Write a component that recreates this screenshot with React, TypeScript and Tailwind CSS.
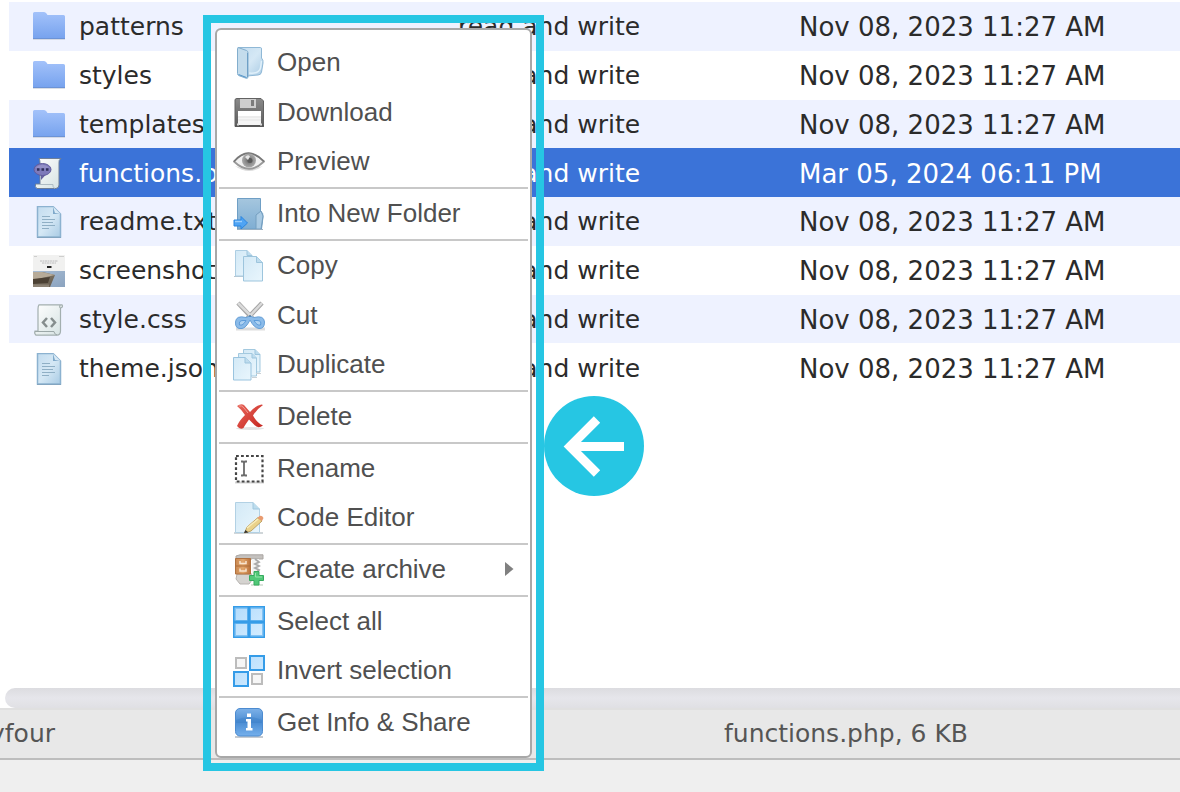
import { JSX } from "react";

type FileRow = {
  name: string;
  date: string;
  icon: JSX.Element;
  selected?: boolean;
};

type MenuItem = {
  label: string;
  icon: JSX.Element;
  submenu?: boolean;
};

// Gradients shared by all the icons
const IconDefs = () => (
  <svg className="absolute w-0 h-0" aria-hidden="true">
    <defs>
      <linearGradient id="folder" x1="0" y1="0" x2="0" y2="1">
        <stop offset="0" stopColor="#a3c2fa" />
        <stop offset="1" stopColor="#76a2ee" />
      </linearGradient>
      <linearGradient id="page" x1="0" y1="0" x2="1" y2="1">
        <stop offset="0" stopColor="#c3dcef" />
        <stop offset="0.5" stopColor="#d5e8f5" />
        <stop offset="1" stopColor="#a9cbe4" />
      </linearGradient>
      <linearGradient id="sheet" x1="0" y1="0" x2="1" y2="1">
        <stop offset="0" stopColor="#d3e9f6" />
        <stop offset="1" stopColor="#e9f6fd" />
      </linearGradient>
      <linearGradient id="scroll" x1="0" y1="0" x2="1" y2="1">
        <stop offset="0" stopColor="#ffffff" />
        <stop offset="1" stopColor="#d5e2e2" />
      </linearGradient>
      <linearGradient id="blueFolder" x1="0" y1="0" x2="0" y2="1">
        <stop offset="0" stopColor="#a5c6de" />
        <stop offset="1" stopColor="#7faed3" />
      </linearGradient>
      <linearGradient id="metal" x1="0" y1="0" x2="0" y2="1">
        <stop offset="0" stopColor="#8a8a8a" />
        <stop offset="1" stopColor="#5c5c5c" />
      </linearGradient>
      <linearGradient id="red" x1="0" y1="0" x2="1" y2="1">
        <stop offset="0" stopColor="#e8675c" />
        <stop offset="1" stopColor="#c5231d" />
      </linearGradient>
      <linearGradient id="tile" x1="0" y1="0" x2="1" y2="1">
        <stop offset="0" stopColor="#b4dcfc" />
        <stop offset="1" stopColor="#d3ecff" />
      </linearGradient>
      <linearGradient id="info" x1="0" y1="0" x2="0" y2="1">
        <stop offset="0" stopColor="#7db1e8" />
        <stop offset="0.5" stopColor="#4a8cd3" />
        <stop offset="1" stopColor="#75b0ec" />
      </linearGradient>
      <linearGradient id="drawer" x1="0" y1="0" x2="1" y2="0">
        <stop offset="0" stopColor="#c98952" />
        <stop offset="0.5" stopColor="#e3a66c" />
        <stop offset="1" stopColor="#b9713a" />
      </linearGradient>
      <radialGradient id="iris">
        <stop offset="0" stopColor="#5d5d5d" />
        <stop offset="0.45" stopColor="#888888" />
        <stop offset="1" stopColor="#ababab" />
      </radialGradient>
      <linearGradient id="rock" x1="0" y1="0" x2="1" y2="1">
        <stop offset="0" stopColor="#8f8878" />
        <stop offset="1" stopColor="#63584a" />
      </linearGradient>
      <linearGradient id="sky" x1="0" y1="0" x2="1" y2="1">
        <stop offset="0" stopColor="#a8bdd4" />
        <stop offset="1" stopColor="#8ba3bf" />
      </linearGradient>
    </defs>
  </svg>
);

const Icon = ({ children }: { children: React.ReactNode }) => (
  <svg className="size-8 shrink-0" viewBox="0 0 32 32" fill="none" aria-hidden="true">
    {children}
  </svg>
);

const FolderIcon = () => (
  <Icon>
    <path d="M0 2.500Q0 1 1.500 1H11Q12.500 1 13.500 2.500L14.500 4H30.500Q32 4 32 5.500V28H0Z" fill="url(#folder)" />
    <path d="M0 27.500H32" stroke="#6c93d6" />
    <path d="M0 28.500H32" stroke="#c3c8d3" opacity="0.600" />
  </Icon>
);

const TextFileIcon = () => (
  <Icon>
    <path d="M4.500 .5H20L27.500 8V31H4.500Z" fill="url(#page)" stroke="#8cb2d0" strokeWidth="1.500" />
    <path d="M20 .5V8H27.500Z" fill="#7fa9ca" />
    <path d="M20 .5 22 7 27.500 8Z" fill="#d8eaf6" />
    <path d="M9 10.500H17M9 13.500H22M9 16.500H20M9 19.500H22M9 22.500H16" stroke="#8fafc5" />
    <path d="M4 31.500H28" stroke="#83a5c0" />
  </Icon>
);

const PhpIcon = () => (
  <Icon>
    <path d="M6 .5H28Q25.500 2 26 5V27Q26 30 23 30.500H4Q1.500 29 2.500 26H7V5Q7 2 6 .5Z" fill="url(#scroll)" stroke="#6e7f99" />
    <path d="M3 26.500H20Q19 29 22 30.500" stroke="#aebcc4" />
    <path d="M8 17V22L13 16.500Z" fill="#66629f" />
    <ellipse cx="9.500" cy="11.500" rx="8.500" ry="6" fill="#7e7aba" stroke="#605c9c" />
    <path d="M2.500 9.500Q9 4 16.500 9.500Q9 11.500 2.500 9.500Z" fill="#a19ed0" opacity="0.600" />
    <path d="M4 11.500H6.500M8.500 11.500H11M13 11.500H15.500" stroke="#30305c" strokeWidth="2.500" />
  </Icon>
);

const ScreenshotIcon = () => (
  <Icon>
    <path d="M0 0H32V16H0Z" fill="#f1f1f0" />
    <path d="M1 1.500H4M26 1.500H31" stroke="#aaaaaa" strokeWidth="0.500" />
    <path d="M7 6H25M9 8H23" stroke="#b0b0b0" strokeWidth="0.800" strokeDasharray="2 .5" />
    <path d="M14 12H18.500" stroke="#222222" strokeWidth="2" />
    <path d="M0 16H32V32H0Z" fill="url(#sky)" />
    <path d="M0 17H10L22 20L17 32H0Z" fill="url(#rock)" />
    <path d="M0 17H9L22 20L0 25Z" fill="#b7ab98" />
    <path d="M0 24 17 22 15 28 0 29Z" fill="#4c4134" />
    <path d="M0 29.500H16V32H0Z" fill="#8c8274" />
  </Icon>
);

const CssIcon = () => (
  <Icon>
    <path d="M6 .8H29Q30.500 3 27.500 4V27Q27.500 31 24 31.200H3Q1 29.500 2 27H5V5Q5 2 6 .8Z" fill="url(#scroll)" stroke="#a3afaf" strokeWidth="1.200" />
    <path d="M27.500 4.500Q26 3.500 27 1M2 27.500H21Q21 30 24 31" stroke="#9ca8a8" />
    <path d="m14 14-4 4.500 4 4.500M18 14l4 4.500-4 4.500" stroke="#858d8d" strokeWidth="2.500" />
  </Icon>
);

const OpenIcon = () => (
  <Icon>
    <path d="M5 .5H27.500Q28.500 .5 28.500 2V11Q30.500 13 30 16L28.500 25Q28 28 25 28L14 29Z" fill="url(#page)" stroke="#8fb8d6" />
    <path d="M16 26Q26 27 27.500 21L28.500 14" stroke="#e0f0fa" strokeWidth="1.500" />
    <path d="M4.500 1.500Q4.500 .5 6 .8L13.500 3.500Q15 4 15 6V30Q15 31.800 13 31.200L5.500 28.500Q4.500 28 4.500 26.500Z" fill="#c4dcec" stroke="#83aecd" />
    <path d="M14.500 6V30" stroke="#6fa0c6" />
    <path d="M5.500 27.500 13.500 30.500" stroke="#5293c9" />
  </Icon>
);

const DownloadIcon = () => (
  <Icon>
    <path d="M2 3Q2 1.500 4 1.500H28L30.500 4V29.500H2Z" fill="url(#metal)" stroke="#626262" />
    <path d="M7 2H23V11H7Z" fill="#cecece" />
    <path d="M18 3H21V9H18Z" fill="#7c7c7c" />
    <path d="M5 14H28V28H5Z" fill="#f5f5f5" />
    <path d="M5 14H28V19H5Z" fill="#ffffff" />
    <path d="M5 20H28M5 23H28" stroke="#e3e3e3" />
    <path d="M2 29H31" stroke="#555555" strokeWidth="1.500" />
    <path d="M4 27.500H6M27 27.500H29" stroke="#dddddd" strokeWidth="2" />
  </Icon>
);

const PreviewIcon = () => (
  <Icon>
    <path d="M2 20Q16 30 30 20Q16 25 2 20Z" fill="#dcdcdc" />
    <path d="M1 15.500Q15 -1 31 15.500Q16 30 1 15.500Z" fill="#f1f1f1" stroke="#9a9a9a" strokeWidth="1.800" />
    <path d="M1 15.500Q15 -1 31 15.500" stroke="#777777" strokeWidth="1.500" />
    <circle cx="16" cy="14.500" r="7" fill="url(#iris)" />
    <circle cx="17" cy="14.500" r="2.500" fill="#5a5a5a" />
    <path d="M12 11Q15 8 17 10.500L15 14Z" fill="#e5e5e5" />
  </Icon>
);

const IntoFolderIcon = () => (
  <Icon>
    <path d="M4.500 .5H27.500V13Q30.500 15 30 19L28.500 31H4.500Z" fill="url(#blueFolder)" stroke="#6f9fc5" />
    <path d="M28 13 23 17V31H28L30 18Z" fill="#a9cae3" stroke="#759fc0" />
    <path d="M4 31.500H30" stroke="#9ab0c2" />
    <path d="M1 22H8V18.500L14.500 25L8 31V28H1Z" fill="#4fa4f4" stroke="#2b85df" />
    <path d="M2 23.500H9" stroke="#9bcefc" strokeWidth="1.500" />
  </Icon>
);

const CopyIcon = () => (
  <Icon>
    <path d="M1 26.500H12" stroke="#b9c5cc" />
    <path d="M2.500 .5H14L19 5.500V26H2.500Z" fill="url(#sheet)" stroke="#adcee3" />
    <path d="M10.500 6.500H23.500L29.500 12.500V31H10.500Z" fill="url(#sheet)" stroke="#9dc5dd" />
    <path d="M14 .5V5.500H19M23.500 6.500V12.500H29.500" fill="#bedcee" stroke="#9dc5dd" />
  </Icon>
);

const CutIcon = () => (
  <Icon>
    <path d="M3 29H32" stroke="#dddddd" strokeWidth="3" />
    <path d="M5 3 21 20M29 3 13 20" stroke="#a5a5a5" strokeWidth="4.500" />
    <path d="M5 3 21 19M29 3 14 19" stroke="#dadada" strokeWidth="2.500" />
    <path d="M17 16 21 17.500Q31 15 31.500 22Q31.500 29 26 28.500Q21 28 17 20Q13 28 9 28.500Q2 29.500 2.500 22Q3 15 13 17.500Z" fill="#8bbbe9" stroke="#68a0d6" />
    <path d="M6.500 25Q5.500 20.500 10 20.500H13Q10 26 6.500 25ZM27.500 25Q29 20.500 24 20.500H21Q24 26 27.500 25Z" fill="#aed2f2" stroke="#5d9cda" />
    <circle cx="17" cy="16" r="1" fill="#547ba0" />
  </Icon>
);

const DuplicateIcon = () => (
  <Icon>
    <path d="M10.500 .5H22L27 5.500V23H10.500Z" fill="url(#sheet)" stroke="#a3c9df" />
    <path d="M5.500 4.500H19L23.500 9V27H5.500Z" fill="url(#sheet)" stroke="#a3c9df" />
    <path d="M23 24.500H28M19 28.500H24" stroke="#c9d1d6" />
    <path d="M22 .5V5.500H27M19 4.500V9H23.500" fill="#bedcee" stroke="#9dc5dd" />
    <path d="M.5 8.500H12L18 14V31H.5Z" fill="url(#sheet)" stroke="#9ac4df" />
    <path d="M12 8.500V14H18" fill="#bedcee" stroke="#9dc5dd" />
  </Icon>
);

const DeleteIcon = () => (
  <Icon>
    <ellipse cx="17" cy="27.500" rx="14" ry="1.500" fill="#e3e3e3" />
    <path d="M4 5Q8 2 11 4L17 11Q22 5 28.500 3.500L30 4Q24 8 20 14.500Q24 22 30 24.500Q25 28 21.500 24L16 18.500Q12 24 10.500 27Q7 29 4 25Q6 20 12 14Q9 9 4 5Z" fill="url(#red)" />
    <path d="M6 5Q9 4 11 7L15 12" stroke="#f19a91" />
  </Icon>
);

const RenameIcon = () => (
  <Icon>
    <path d="M2 29.500H31" stroke="#d4d4d4" strokeWidth="2" />
    <path d="M3 3H29.500V28.500H3Z" stroke="#454545" strokeWidth="2.200" strokeDasharray="2.800 2.200" />
    <path d="M8 8.500H10L11 10 12 8.500H14M8 22.500H10L11 21 12 22.500H14M11 10V21" stroke="#6c6c6c" strokeWidth="1.800" />
  </Icon>
);

const EditorIcon = () => (
  <Icon>
    <path d="M1 31H30" stroke="#c1c9cd" strokeWidth="1.500" />
    <path d="M2.500 .5H20L26.500 7V30.500H2.500Z" fill="url(#sheet)" stroke="#b2d1e4" />
    <path d="M20 .5V7H26.500" fill="#bcdced" stroke="#a0c8df" />
    <path d="M11.500 31 14 25 25 15.500 29 19 18 29Z" fill="#ead28a" stroke="#bda366" />
    <path d="M14 26 25 17" stroke="#f8edbd" strokeWidth="1.500" />
    <path d="m24.500 16 2-2Q29 13 30.500 16L29 19Z" fill="#e99b70" />
    <path d="m11 31 1.500-3 3 2.500Z" fill="#333333" />
  </Icon>
);

const ArchiveIcon = () => (
  <Icon>
    <path d="M3 2 7 .8H30V5H3Z" fill="#c4c1be" stroke="#aaa6a3" />
    <path d="M4 20H19V26L16 30H7L3 25Z" fill="#d5d3d0" stroke="#b7b4b1" />
    <path d="M19 5H26V21H19Z" fill="#f4f4f4" />
    <path d="M22 5 26 8 22 10 26 12 22 14 26 16 23 19" stroke="#aaaaaa" strokeWidth="1.800" />
    <path d="M2.500 4.500H17.500V20H2.500Z" fill="url(#drawer)" stroke="#b0713f" />
    <path d="M3 12H17" stroke="#ad6c38" />
    <path d="M7 7V9.500H13V7M7 14.500V17H13V14.500" stroke="#f8e3ce" strokeWidth="1.500" />
    <path d="M18 31H30" stroke="#ccd8cc" strokeWidth="1.500" />
    <path d="M21 17.500H26V21.500H30.500V26.500H26V31H21V26.500H16.500V21.500H21Z" fill="#51c878" stroke="#36ab5f" />
    <path d="M22.500 19V23H29" stroke="#98e4ab" />
  </Icon>
);

const SelectAllIcon = () => (
  <Icon>
    <path d="M0 0H32V32H0Z" fill="#359ce8" />
    <path d="M1.500 1.500H14.500V14.500H1.500ZM17.500 1.500H30.500V14.500H17.500ZM1.500 17.500H14.500V30.500H1.500ZM17.500 17.500H30.500V30.500H17.500Z" fill="#84c3f4" />
    <path d="M3 3H14V14H3ZM18 3H29V14H18ZM3 18H14V29H3ZM18 18H29V29H18Z" fill="url(#tile)" />
  </Icon>
);

const InvertIcon = () => (
  <Icon>
    <path d="M17 1H31V15H17ZM1 17H15V31H1Z" fill="url(#tile)" stroke="#359ce8" strokeWidth="2" />
    <path d="M3 3H13V13H3ZM19 19H29V29H19Z" fill="#f6f6f6" stroke="#bcbcbc" strokeWidth="2" />
  </Icon>
);

const InfoIcon = () => (
  <Icon>
    <path d="M2 30H30" stroke="#c5cad0" strokeWidth="2" />
    <rect x="2.500" y="1.500" width="27" height="27.500" rx="4.500" fill="url(#info)" stroke="#4c8bd0" />
    <path d="M3 13Q16 7 29 13V16H3Z" fill="#377bc4" opacity="0.350" />
    <path d="M14 6.500H18V10H14ZM13 12H18V21H19.500V23.500H13V21H14.500V14.500H13Z" fill="#ffffff" />
  </Icon>
);

const files: FileRow[] = [
  { name: "patterns", date: "Nov 08, 2023 11:27 AM", icon: <FolderIcon /> },
  { name: "styles", date: "Nov 08, 2023 11:27 AM", icon: <FolderIcon /> },
  { name: "templates", date: "Nov 08, 2023 11:27 AM", icon: <FolderIcon /> },
  { name: "functions.php", date: "Mar 05, 2024 06:11 PM", icon: <PhpIcon />, selected: true },
  { name: "readme.txt", date: "Nov 08, 2023 11:27 AM", icon: <TextFileIcon /> },
  { name: "screenshot.png", date: "Nov 08, 2023 11:27 AM", icon: <ScreenshotIcon /> },
  { name: "style.css", date: "Nov 08, 2023 11:27 AM", icon: <CssIcon /> },
  { name: "theme.json", date: "Nov 08, 2023 11:27 AM", icon: <TextFileIcon /> },
];

const menuGroups: MenuItem[][] = [
  [
    { label: "Open", icon: <OpenIcon /> },
    { label: "Download", icon: <DownloadIcon /> },
    { label: "Preview", icon: <PreviewIcon /> },
  ],
  [{ label: "Into New Folder", icon: <IntoFolderIcon /> }],
  [
    { label: "Copy", icon: <CopyIcon /> },
    { label: "Cut", icon: <CutIcon /> },
    { label: "Duplicate", icon: <DuplicateIcon /> },
  ],
  [{ label: "Delete", icon: <DeleteIcon /> }],
  [
    { label: "Rename", icon: <RenameIcon /> },
    { label: "Code Editor", icon: <EditorIcon /> },
  ],
  [{ label: "Create archive", icon: <ArchiveIcon />, submenu: true }],
  [
    { label: "Select all", icon: <SelectAllIcon /> },
    { label: "Invert selection", icon: <InvertIcon /> },
  ],
  [{ label: "Get Info & Share", icon: <InfoIcon /> }],
];

// Total height of a group, by the number of items in it
const groupHeights = ["", "h-[50px]", "h-[99px]", "h-[149px]"];

const FileTable = () => (
  <table className="w-full h-[390px] table-fixed border-collapse text-left whitespace-nowrap">
    <colgroup>
      <col className="w-[449px]" />
      <col className="w-[341px]" />
      <col />
    </colgroup>
    <tbody>
      {files.map((file) => (
        <tr
          key={file.name}
          className={
            file.selected
              ? "bg-[#3b73d8] text-white"
              : "odd:bg-[#eef2ff] even:bg-white text-[#2b2b2b]"
          }
        >
          <td className="p-0 pt-0.5 pl-6">
            <div className="flex items-center gap-3.5">
              {file.icon}
              <span>{file.name}</span>
            </div>
          </td>
          <td className="p-0 pt-0.5">read and write</td>
          <td className="p-0 pt-0.5 text-[26px]">{file.date}</td>
        </tr>
      ))}
    </tbody>
  </table>
);

const ContextMenu = () => (
  <div
    role="menu"
    className="rounded-md border-2 border-[#a8a8a8] bg-white px-0.5 py-2 font-['Liberation_Sans',Arial,sans-serif] text-[26px] leading-8 text-[#505050]"
  >
    {menuGroups.map((group) => (
      <div key={group[0].label} className="border-[#c8c8c8] not-first:border-t-2">
        <div className={`flex flex-col ${groupHeights[group.length]}`}>
          {group.map((item) => (
            <button
              key={item.label}
              type="button"
              role="menuitem"
              className="flex flex-1 items-center gap-3 px-3.5 text-left whitespace-nowrap"
            >
              {item.icon}
              <span className="flex-1 pb-0.5">{item.label}</span>
              {item.submenu && (
                <svg className="h-4 w-2.5" viewBox="0 0 10 16" aria-hidden="true">
                  <path d="M1 0 9.500 7 1 14Z" fill="#808080" />
                </svg>
              )}
            </button>
          ))}
        </div>
      </div>
    ))}
  </div>
);

const App = () => {
  return (
    <div className="relative flex min-h-screen flex-col overflow-hidden bg-white font-['DejaVu_Sans',Verdana,sans-serif] text-[25px] leading-8">
      <IconDefs />

      {/* File list */}
      <main className="flex-1 pl-[9px] pt-0.5">
        <FileTable />
      </main>

      {/* Horizontal scrollbar */}
      <div className="pl-[5px]">
        <div className="h-5 rounded-l-full bg-linear-to-b from-[#dcdce0] via-[#e6e6eb] to-[#e0e0e4]"></div>
      </div>

      {/* Status bar */}
      <footer className="border-b-[32px] border-[#efefef] text-[#555555]">
        <div className="flex h-[52px] items-center border-t-2 border-b-2 border-t-[#e0e0e0] border-b-[#bdbdbd] bg-[#e8e8e8]">
          <span className="flex w-[55px] justify-end">yfour</span>
          <span className="ml-[669px] whitespace-nowrap">functions.php, 6 KB</span>
        </div>
      </footer>

      {/* Highlighted context menu */}
      <div className="absolute left-[203px] top-[15px] w-[341px] border-8 border-[#26c6e3] px-1 py-[5px]">
        <ContextMenu />
      </div>
      <div className="absolute left-[544px] top-[396px] size-[100px] rounded-full bg-[#26c6e3]">
        <svg viewBox="0 0 100 100" fill="none" aria-hidden="true">
          <path d="M53 23.500 26 50.500 53 77.500M25 50.500H80" stroke="#ffffff" strokeWidth="9" />
        </svg>
      </div>
    </div>
  );
};

export default App;
